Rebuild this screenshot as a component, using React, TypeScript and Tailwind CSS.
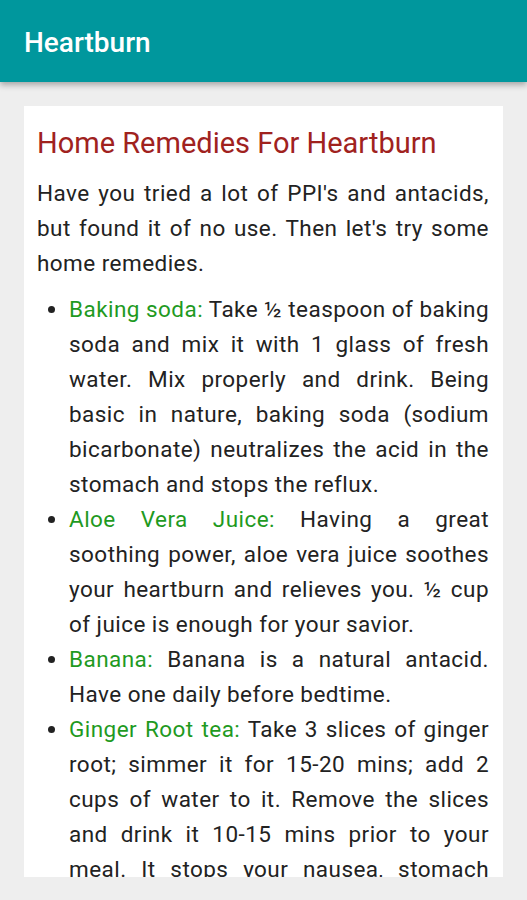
import React from "react";

interface Remedy {
  name: string;
  text: string;
}

const remedies: Remedy[] = [
  {
    name: "Baking soda:",
    text: "Take ½ teaspoon of baking soda and mix it with 1 glass of fresh water. Mix properly and drink. Being basic in nature, baking soda (sodium bicarbonate) neutralizes the acid in the stomach and stops the reflux.",
  },
  {
    name: "Aloe Vera Juice:",
    text: "Having a great soothing power, aloe vera juice soothes your heartburn and relieves you. ½ cup of juice is enough for your savior.",
  },
  {
    name: "Banana:",
    text: "Banana is a natural antacid. Have one daily before bedtime.",
  },
  {
    name: "Ginger Root tea:",
    text: "Take 3 slices of ginger root; simmer it for 15-20 mins; add 2 cups of water to it. Remove the slices and drink it 10-15 mins prior to your meal. It stops your nausea, stomach ache and also soothes the burning sensation in your chest.",
  },
];

export default function App() {
  return (
    <div className="h-[900px] flex flex-col bg-[#eeeeee] font-['Roboto',sans-serif] overflow-hidden">
      {/* App bar */}
      <header className="h-[82px] shrink-0 bg-[#00979d] flex items-center px-6 pt-[4px] shadow-[0_3px_6px_rgba(0,0,0,0.3)] z-10">
        <h1 className="text-white text-[28px] font-medium">Heartburn</h1>
      </header>

      {/* Content card */}
      <div className="flex-1 min-h-0 px-6 pt-6 pb-[23px]">
        <div className="h-full bg-white overflow-hidden pl-[13px] pr-[14px] pt-[17px]">
          <h2 className="text-[#a0221e] text-[29px] leading-[40px] mb-[13px]">Home Remedies For Heartburn</h2>
          <p className="text-[#222222] text-[22.5px] tracking-[0.45px] leading-[35px] text-justify">
            Have you tried a lot of PPI's and antacids, but found it of no use. Then let's try some home remedies.
          </p>
          <ul className="mt-[11px] pl-[32px] list-disc text-[#222222] text-[22.5px] tracking-[0.45px] leading-[35px] text-justify">
            {remedies.map((r) => (
              <li key={r.name}>
                <span className="text-[#1f9a1f]">{r.name}</span> {r.text}
              </li>
            ))}
          </ul>
        </div>
      </div>
    </div>
  );
}
